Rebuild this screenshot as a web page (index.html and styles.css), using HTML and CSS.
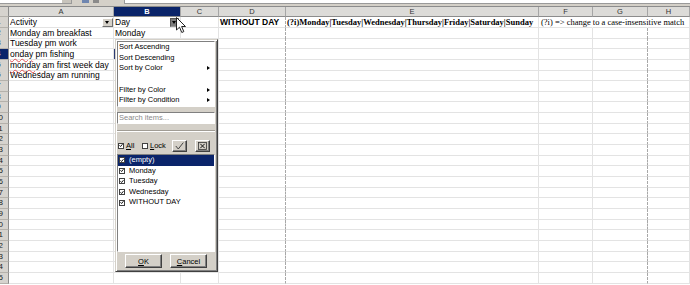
FILE: index.html
```html
<!DOCTYPE html>
<html lang="en">
<head>
  <meta charset="UTF-8">
  <title>Standard Filter | Sheet</title>
  <link rel="stylesheet" href="styles.css">
</head>
<body>

<div class="toolbar">
  <div class="namebox"><span class="nb-drop"></span></div>
  <div class="tb-icons"><span class="sum"></span><span class="eq"></span></div>
  <div class="formula"></div>
</div>

<div class="sheet">
  <div class="row colhead">
    <div class="rh"></div>
    <div>A</div><div class="sel">B</div><div>C</div><div>D</div><div>E</div><div>F</div><div>G</div><div>H</div>
  </div>

  <div class="row">
    <div class="rh"><span>1</span></div>
    <div class="btn-cell">Activity<span class="af"></span></div>
    <div class="btn-cell">Day<span class="af pressed"></span></div>
    <div></div>
    <div class="pb strong">WITHOUT DAY</div>
    <div class="regex">(?i)Monday|Tuesday|Wednesday|Thursday|Friday|Saturday|Sunday</div>
    <div class="note ov">(?i) =&gt; change to a case-insensitive match</div>
    <div class="ov"></div>
    <div></div>
  </div>
  <div class="row">
    <div class="rh"><span>2</span></div>
    <div>Monday am breakfast</div><div>Monday</div><div></div><div class="pb"></div><div></div><div></div><div class="pb"></div><div></div>
  </div>
  <div class="row">
    <div class="rh"><span>3</span></div>
    <div>Tuesday pm work</div><div></div><div></div><div class="pb"></div><div></div><div></div><div class="pb"></div><div></div>
  </div>
  <div class="row">
    <div class="rh cur"><span>4</span></div>
    <div><span class="typo">onday</span> pm fishing</div><div class="cursor"></div><div></div><div class="pb"></div><div></div><div></div><div class="pb"></div><div></div>
  </div>
  <div class="row">
    <div class="rh"><span>5</span></div>
    <div><span class="typo">monday</span> am first week day</div><div></div><div></div><div class="pb"></div><div></div><div></div><div class="pb"></div><div></div>
  </div>
  <div class="row">
    <div class="rh"><span>6</span></div>
    <div>Wednesday am running</div><div></div><div></div><div class="pb"></div><div></div><div></div><div class="pb"></div><div></div>
  </div>
  <div class="row"><div class="rh"><span>7</span></div><div></div><div></div><div></div><div class="pb"></div><div></div><div></div><div class="pb"></div><div></div></div>
  <div class="row"><div class="rh"><span>8</span></div><div></div><div></div><div></div><div class="pb"></div><div></div><div></div><div class="pb"></div><div></div></div>
  <div class="row"><div class="rh"><span>9</span></div><div></div><div></div><div></div><div class="pb"></div><div></div><div></div><div class="pb"></div><div></div></div>
  <div class="row"><div class="rh"><span>10</span></div><div></div><div></div><div></div><div class="pb"></div><div></div><div></div><div class="pb"></div><div></div></div>
  <div class="row"><div class="rh"><span>11</span></div><div></div><div></div><div></div><div class="pb"></div><div></div><div></div><div class="pb"></div><div></div></div>
  <div class="row"><div class="rh"><span>12</span></div><div></div><div></div><div></div><div class="pb"></div><div></div><div></div><div class="pb"></div><div></div></div>
  <div class="row"><div class="rh"><span>13</span></div><div></div><div></div><div></div><div class="pb"></div><div></div><div></div><div class="pb"></div><div></div></div>
  <div class="row"><div class="rh"><span>14</span></div><div></div><div></div><div></div><div class="pb"></div><div></div><div></div><div class="pb"></div><div></div></div>
  <div class="row"><div class="rh"><span>15</span></div><div></div><div></div><div></div><div class="pb"></div><div></div><div></div><div class="pb"></div><div></div></div>
  <div class="row"><div class="rh"><span>16</span></div><div></div><div></div><div></div><div class="pb"></div><div></div><div></div><div class="pb"></div><div></div></div>
  <div class="row"><div class="rh"><span>17</span></div><div></div><div></div><div></div><div class="pb"></div><div></div><div></div><div class="pb"></div><div></div></div>
  <div class="row"><div class="rh"><span>18</span></div><div></div><div></div><div></div><div class="pb"></div><div></div><div></div><div class="pb"></div><div></div></div>
  <div class="row"><div class="rh"><span>19</span></div><div></div><div></div><div></div><div class="pb"></div><div></div><div></div><div class="pb"></div><div></div></div>
  <div class="row"><div class="rh"><span>20</span></div><div></div><div></div><div></div><div class="pb"></div><div></div><div></div><div class="pb"></div><div></div></div>
  <div class="row"><div class="rh"><span>21</span></div><div></div><div></div><div></div><div class="pb"></div><div></div><div></div><div class="pb"></div><div></div></div>
  <div class="row"><div class="rh"><span>22</span></div><div></div><div></div><div></div><div class="pb"></div><div></div><div></div><div class="pb"></div><div></div></div>
  <div class="row"><div class="rh"><span>23</span></div><div></div><div></div><div></div><div class="pb"></div><div></div><div></div><div class="pb"></div><div></div></div>
  <div class="row"><div class="rh"><span>24</span></div><div></div><div></div><div></div><div class="pb"></div><div></div><div></div><div class="pb"></div><div></div></div>
  <div class="row"><div class="rh"><span>25</span></div><div></div><div></div><div></div><div class="pb"></div><div></div><div></div><div class="pb"></div><div></div></div>
</div>

<!-- mouse pointer over the B1 filter button -->
<svg class="pointer" width="11" height="17" viewBox="0 0 11 17">
  <path d="M0.5 0.5 L0.5 13 L3.5 10.2 L5.8 15.5 L7.8 14.6 L5.6 9.5 L9.5 9.5 Z" fill="#fff" stroke="#222" stroke-width="1" stroke-linejoin="round"/>
</svg>

<div class="filter-pop">
  <div class="menu">
    <div class="mi">Sort Ascending</div>
    <div class="mi">Sort Descending</div>
    <div class="mi sub">Sort by Color</div>
    <div class="mi"></div>
    <div class="mi sub">Filter by Color</div>
    <div class="mi sub">Filter by Condition</div>
  </div>
  <div class="search">Search items...</div>
  <div class="etch"></div>
  <div class="toggles">
    <span class="cb"><svg width="5" height="5" viewBox="0 0 5 5"><path d="M0.6 2.2 L2 3.8 L4.4 0.8" fill="none" stroke="#000" stroke-width="1.1"/></svg></span>
    <span class="tg-label"><u>A</u>ll</span>
    <span class="cb"></span>
    <span class="tg-label"><u>L</u>ock</span>
    <button class="ib">
      <svg width="9" height="8" viewBox="0 0 9 8"><path d="M0.8 4 L3.3 7 L8.3 0.6" fill="none" stroke="#333" stroke-width="0.9"/></svg>
    </button>
    <button class="ib">
      <svg width="9" height="8" viewBox="0 0 9 8"><rect x="0.5" y="0.5" width="8" height="7" fill="none" stroke="#333" stroke-width="0.8"/><path d="M2.3 1.8 L6.7 6.2 M6.7 1.8 L2.3 6.2" stroke="#111" stroke-width="1"/></svg>
    </button>
  </div>
  <div class="values">
    <div class="val current"><span class="cb"><svg width="5" height="5" viewBox="0 0 5 5"><path d="M0.6 2.2 L2 3.8 L4.4 0.8" fill="none" stroke="#000" stroke-width="1.1"/></svg></span>(empty)</div>
    <div class="val"><span class="cb"><svg width="5" height="5" viewBox="0 0 5 5"><path d="M0.6 2.2 L2 3.8 L4.4 0.8" fill="none" stroke="#000" stroke-width="1.1"/></svg></span>Monday</div>
    <div class="val"><span class="cb"><svg width="5" height="5" viewBox="0 0 5 5"><path d="M0.6 2.2 L2 3.8 L4.4 0.8" fill="none" stroke="#000" stroke-width="1.1"/></svg></span>Tuesday</div>
    <div class="val"><span class="cb"><svg width="5" height="5" viewBox="0 0 5 5"><path d="M0.6 2.2 L2 3.8 L4.4 0.8" fill="none" stroke="#000" stroke-width="1.1"/></svg></span>Wednesday</div>
    <div class="val"><span class="cb"><svg width="5" height="5" viewBox="0 0 5 5"><path d="M0.6 2.2 L2 3.8 L4.4 0.8" fill="none" stroke="#000" stroke-width="1.1"/></svg></span>WITHOUT DAY</div>
  </div>
  <div class="actions">
    <button class="btn"><u>O</u>K</button>
    <button class="btn"><u>C</u>ancel</button>
  </div>
</div>

</body>
</html>
```

FILE: styles.css
```css
body {
  margin: 0;
  font-family: 'Liberation Sans', Arial, sans-serif;
  background: #fff;
  color: #000;
  overflow: hidden;
}
.toolbar {
  display: flex;
  height: 6px;
  background: #d4d0c8;
}
.namebox {
  width: 72px;
  height: 4px;
  background: #fff;
  border-bottom: 1px solid #9a9a9a;
  border-right: 1px solid #9a9a9a;
  box-sizing: border-box;
  display: flex;
  justify-content: flex-end;
}
.nb-drop {
  width: 9px;
  background: #c8c4bc;
}
.tb-icons {
  display: flex;
  gap: 4px;
  margin-left: 10px;
  height: 3px;
}
.tb-icons .sum {
  width: 7px;
  background: #6f86b0;
}
.tb-icons .eq {
  width: 6px;
  background: #8a8a8a;
}
.formula {
  flex: 1;
  margin-left: 25px;
  height: 4px;
  background: #fff;
  border-bottom: 1px solid #9a9a9a;
  border-left: 1px solid #9a9a9a;
  box-sizing: border-box;
}

/* grid */
.row {
  display: grid;
  grid-template-columns: 9px 105px 67px 38px 67px 253px 54px 55px 1fr;
  height: 10.68px;
  font-size: 8.5px;
  line-height: 10px;
}
.row > div {
  box-sizing: border-box;
  border-right: 1px solid #e3e3e3;
  border-bottom: 1px solid #e3e3e3;
  padding-left: 1px;
  white-space: nowrap;
}
.row > .pb {
  border-right: 1px dashed #a8a8a8;
}
.row > .ov {
  border-right-color: transparent;
}
.row > .rh {
  padding: 0;
  display: flex;
  justify-content: flex-end;
  overflow: hidden;
  background: #d6d3ce;
  border-right: 1px solid #8c8c8c;
  border-bottom: 1px solid #b4b1ab;
  font-size: 8px;
  color: #222;
}
.rh span {
  flex-shrink: 0;
  width: 19px;
  text-align: center;
}
.row > .rh.cur {
  background: #0a246a;
  color: #fff;
}
.colhead {
  height: 11px;
  border-top: 1px solid #8c8c8c;
  box-sizing: border-box;
}
.colhead > div {
  background: #dcdbd8;
  border-right: 1px solid #a6a6a6;
  border-bottom: 1px solid #8c8c8c;
  text-align: center;
  font-size: 7.5px;
  line-height: 9px;
  color: #333;
  padding: 0;
}
.colhead > .sel {
  background: #0a246a;
  color: #fff;
  font-weight: bold;
}
.row > .cursor {
  box-shadow: inset 1px 0 0 #2c3c74;
}
.btn-cell {
  display: flex;
  align-items: center;
  justify-content: space-between;
}
.af {
  position: relative;
  width: 11px;
  height: 9px;
  box-sizing: border-box;
  background: #d4d0c8;
  border: 1px solid;
  border-color: #fff #6e6e6e #6e6e6e #fff;
}
.af::after {
  content: "";
  position: absolute;
  left: 2px;
  top: 2px;
  border-left: 2.5px solid transparent;
  border-right: 2.5px solid transparent;
  border-top: 3px solid #000;
}
.af.pressed {
  width: 9px;
  margin-right: 1px;
  background: #7c7c7c;
  border-color: #555 #9a9a9a #9a9a9a #555;
}
.af.pressed::after {
  left: 1px;
}
.strong {
  font-weight: bold;
}
.regex {
  font-family: 'Liberation Serif', 'Times New Roman', serif;
  font-weight: bold;
}
.note {
  font-family: 'Liberation Serif', 'Times New Roman', serif;
  padding-left: 2px !important;
}
.typo {
  text-decoration: underline wavy #e05050;
  text-decoration-thickness: 0.5px;
  text-underline-offset: 0.5px;
}
.pointer {
  position: absolute;
  left: 176px;
  top: 17px;
}

/* autofilter popup */
.filter-pop {
  position: absolute;
  left: 115px;
  top: 39px;
  width: 103px;
  height: 233px;
  box-sizing: border-box;
  padding: 1px 2px 2px 1px;
  background: #d4d0c8;
  border: 1px solid;
  border-color: #d4d0c8 #404040 #404040 #d4d0c8;
  box-shadow: inset 1px 1px 0 #fff, inset -1px -1px 0 #808080;
  display: flex;
  flex-direction: column;
  font-size: 7.5px;
  color: #000;
}
.menu, .search, .values {
  background: #fff;
  border: 1px solid;
  border-color: #808080 #fff #fff #808080;
}
.menu {
  height: 66px;
  box-sizing: border-box;
}
.mi {
  position: relative;
  height: 10.67px;
  line-height: 10.67px;
  padding-left: 1px;
}
.mi.sub::after {
  content: "";
  position: absolute;
  right: 4px;
  top: 3px;
  border-top: 2.5px solid transparent;
  border-bottom: 2.5px solid transparent;
  border-left: 3px solid #000;
}
.search {
  margin-top: 5px;
  height: 12px;
  box-sizing: border-box;
  line-height: 10px;
  padding-left: 1px;
  color: #8a8a8a;
}
.etch {
  margin-top: 6px;
  height: 0;
  border-top: 1px solid #a09c94;
  border-bottom: 1px solid #fff;
}
.toggles {
  margin-top: 7px;
  height: 13px;
  display: flex;
  align-items: center;
}
.cb {
  width: 6px;
  height: 6px;
  box-sizing: border-box;
  background: #fff;
  border: 1px solid #404040;
  display: inline-flex;
  align-items: center;
  justify-content: center;
  flex-shrink: 0;
  vertical-align: middle;
}
.toggles .cb {
  margin-left: 1px;
}
.tg-label {
  margin-left: 2px;
  width: 13px;
}
.tg-label + .cb {
  margin-left: 3px;
}
.ib {
  width: 15px;
  height: 12px;
  padding: 0;
  background: #d4d0c8;
  border: 1px solid;
  border-color: #fff #404040 #404040 #fff;
  box-shadow: inset -1px -1px 0 #808080;
  display: flex;
  align-items: center;
  justify-content: center;
}
.ib:first-of-type {
  margin-left: 9px;
}
.ib + .ib {
  margin-left: 8px;
}
.values {
  margin-top: 2px;
  height: 98px;
  box-sizing: border-box;
}
.val {
  height: 10.6px;
  line-height: 10.6px;
  display: flex;
  align-items: center;
  gap: 4px;
  padding-left: 1px;
  white-space: nowrap;
}
.val.current {
  background: #0a246a;
  color: #fff;
}
.actions {
  margin-top: 2px;
  display: flex;
  gap: 8px;
  padding-left: 8px;
}
.btn {
  width: 37px;
  height: 14px;
  padding: 0;
  font-family: inherit;
  font-size: 7.5px;
  background: #d4d0c8;
  color: #000;
  border: 1px solid;
  border-color: #fff #404040 #404040 #fff;
  box-shadow: inset -1px -1px 0 #808080;
}
```
